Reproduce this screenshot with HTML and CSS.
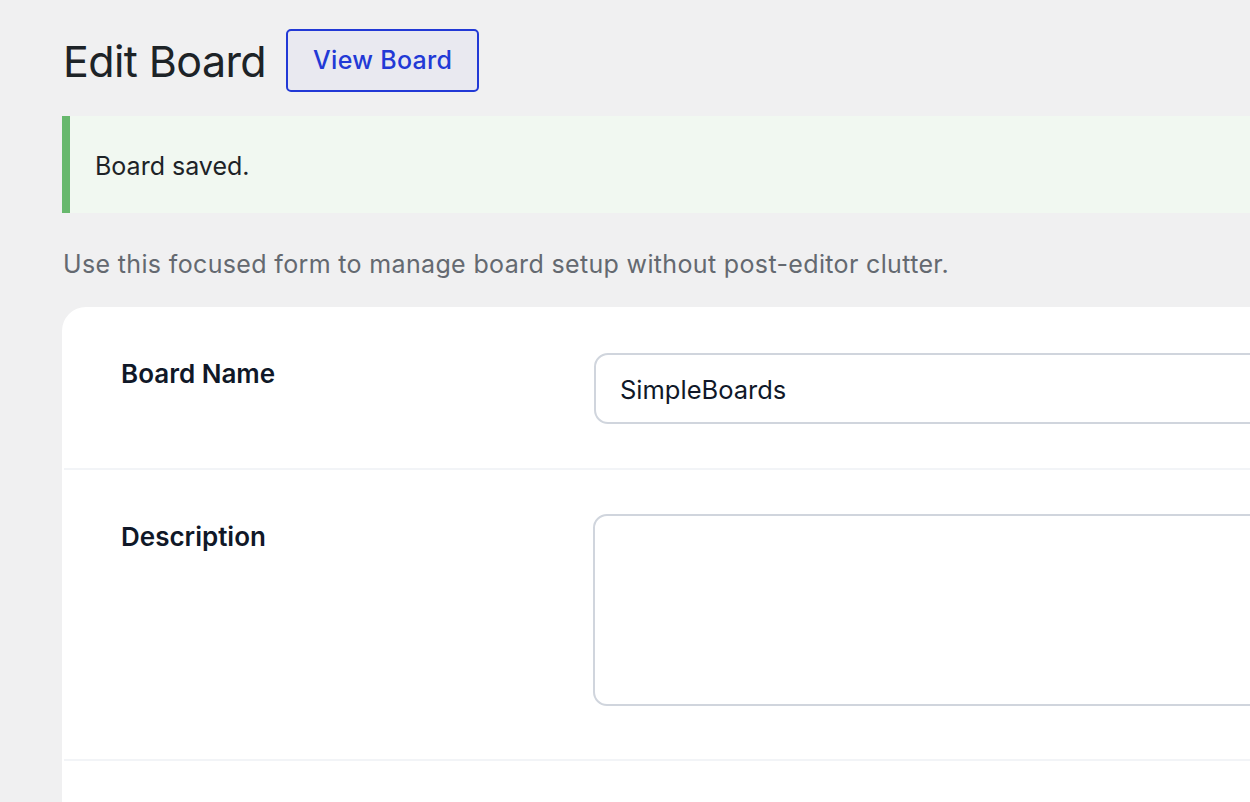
FILE: index.html
```html
<!DOCTYPE html>
<html lang="en">
<head>
<meta charset="utf-8">
<title>Edit Board</title>
<link rel="stylesheet" href="styles.css">
</head>
<body>
<div class="wrap">
  <div class="page-head">
    <h1 class="page-title">Edit Board</h1>
    <a class="page-action" href="#">View Board</a>
  </div>
  <div class="notice">
    <p>Board saved.</p>
  </div>
  <p class="intro">Use this focused form to manage board setup without post-editor clutter.</p>
  <form class="card">
    <div class="row">
      <label class="row-label" for="board-name">Board Name</label>
      <div class="row-field">
        <input id="board-name" class="text-input" type="text" value="SimpleBoards">
      </div>
    </div>
    <div class="row row-desc">
      <label class="row-label" for="board-desc">Description</label>
      <div class="row-field">
        <textarea id="board-desc" class="text-area"></textarea>
      </div>
    </div>
    <div class="row row-empty"></div>
  </form>
</div>
</body>
</html>
```
FILE: styles.css
```css
html, body {
  margin: 0;
  padding: 0;
  background: #f0f0f1;
  overflow: hidden;
}
body {
  font-family: Inter, "Noto Sans", sans-serif;
  color: #1d2327;
  width: 1250px;
  height: 802px;
}
.wrap {
  padding: 29px 0 0 62px;
  width: 1400px;
}
.page-head {
  display: flex;
  align-items: center;
  gap: 20px;
  height: 62px;
}
.page-title {
  margin: 0 0 0 1px;
  font-size: 43px;
  font-weight: 400;
  line-height: 62px;
  color: #1d2327;
  letter-spacing: -0.6px;
  padding-top: 1px;
}
.page-action {
  box-sizing: border-box;
  height: 63px;
  padding: 0 25px;
  display: flex;
  align-items: center;
  border: 2px solid #2239d6;
  border-radius: 5px;
  background: #e9e9f0;
  color: #2239d6;
  font-size: 25px;
  font-weight: 500;
  text-decoration: none;
  letter-spacing: 0.3px;
}
.notice {
  margin-top: 25px;
  height: 97px;
  background: #f1f8f1;
  border-left: 8px solid #67b86d;
  display: flex;
  align-items: center;
  padding-left: 25px;
}
.notice p {
  margin: 0;
  font-size: 25px;
  color: #1d2327;
  padding-top: 2px;
}
.intro {
  margin: 34px 0 0 1px;
  font-size: 25px;
  color: #646970;
  line-height: 34px;
  letter-spacing: 0.35px;
}
.card {
  margin-top: 26px;
  background: #fff;
  border-radius: 24px 0 0 0;
  padding: 0 0 0 2px;
  height: 520px;
}
.row {
  display: grid;
  grid-template-columns: 530px 1fr;
  padding: 46px 0 44px 0;
  border-bottom: 2px solid #f2f4f7;
}
.row-desc {
  padding: 44px 0 53px 0;
}
.row-empty {
  border-bottom: none;
}
.row-label {
  padding-left: 57px;
  padding-top: 5px;
  font-size: 26px;
  font-weight: 600;
  color: #101828;
  line-height: 32px;
}
.row-desc .row-label {
  padding-top: 7px;
}
.text-input {
  box-sizing: border-box;
  width: 800px;
  height: 71px;
  border: 2px solid #d0d5dd;
  border-radius: 14px;
  padding: 2px 24px 0;
  font-family: Inter, "Noto Sans", sans-serif;
  font-size: 25.5px;
  color: #101828;
  background: #fff;
  outline: none;
}
.text-area {
  display: block;
  box-sizing: border-box;
  width: 800px;
  height: 192px;
  margin-left: -1px;
  border: 2px solid #d0d5dd;
  border-radius: 14px;
  padding: 16px 24px;
  font-family: Inter, "Noto Sans", sans-serif;
  font-size: 25px;
  background: #fff;
  resize: none;
  outline: none;
}
```
